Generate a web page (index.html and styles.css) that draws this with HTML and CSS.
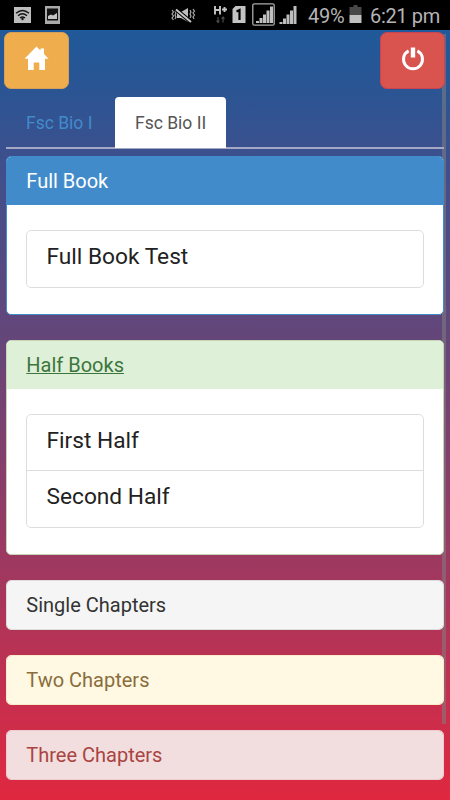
FILE: index.html
```html
<!DOCTYPE html>
<html lang="en">
<head>
<meta charset="utf-8">
<meta name="viewport" content="width=device-width, initial-scale=1">
<title>Fsc Bio II</title>
<link rel="stylesheet" href="styles.css">
</head>
<body>
<header class="status">
  <svg class="status-icons" width="300" height="30" viewBox="0 0 300 30">
    <rect x="14" y="7" width="17" height="16" fill="#bdbdbd"/>
    <g fill="none" stroke="#151515" stroke-width="1.4"><path d="M16 13.300Q22.500 7.500 29 13.300M18 15.700Q22.500 11.800 27 15.700M20 18Q22.500 15.800 25 18"/></g>
    <circle cx="22.500" cy="19" r="1.200" fill="#151515"/>
    <path fill="#aaa" d="M45 6h15v18H45z"/><path fill="#111" d="M47 8.500h11v12H47z"/><path fill="#c4c4c4" d="M48 19v-3l3-1.500 2 1 4-2.500v6z"/>
    <g fill="none" stroke="#aaa" stroke-width="1.200"><path d="M172 10l1.500 2-1.500 2 1.500 2-1.500 2 1.500 2M175 11l1 2-1 2 1 2-1 2"/><path d="M193 9l1.500 2-1.500 2 1.500 2-1.500 2 1 2M190 10l1 2-1 2 1 2-1 2"/></g>
    <path fill="#bdbdbd" d="M177 12h4l7-4v14l-7-4h-4z"/><path d="M176 9.500l15 12.500" stroke="#000" stroke-width="4"/><path d="M176 9.500l15 12.500" stroke="#c5c5c5" stroke-width="2"/>
    <path d="M215 6v8.500M220 6v8.500M215 10h5M222 9.500h5M224.500 7v5" stroke="#c4c4c4" stroke-width="1.900" fill="none"/>
    <path d="M218 17v5M216.500 20.500l1.500 2 1.500-2M223 22.500v-5M221.500 19l1.500-2 1.500 2" stroke="#4b4b4b" stroke-width="1.200" fill="none"/>
    <path fill="#c4c4c4" d="M232.500 9l3-3h10v17h-13z"/><path d="M236.500 11.500l3-1.500v10" stroke="#000" stroke-width="2.200" fill="none"/>
    <rect x="252.800" y="3.800" width="21.400" height="21.400" rx="1.500" fill="none" stroke="#aaa" stroke-width="1.300"/>
    <path fill="#c0c0c0" d="M256 21h3v2h-3zM259.500 18h3v5h-3zM263 14.500h3v8.500h-3zM266.500 10.500h3v12.500h-3zM270 6.500h3V23h-3z"/>
    <path fill="#bdbdbd" d="M279.500 22h3v2h-3zM283 18.500h3v5.500h-3zM286.500 14.500h3v9.500h-3zM290 10.500h3v13.500h-3zM293.500 6h3v18h-3z"/>
  </svg>
  <span class="percent">49%</span>
  <svg class="battery" width="13" height="20" viewBox="0 0 13 20"><path fill="#484848" d="M0.500 2h4V0h4v2h4v8h-12z"/><path fill="#c0c0c0" d="M0.500 10h12v8h-12z"/></svg>
  <span class="time">6:21 pm</span>
</header>
<main class="app">
  <div class="scrollbar"></div>
  <div class="toolbar">
    <button class="btn home" aria-label="Home"><svg width="25" height="25" viewBox="0 0 25 25"><path fill="#fff" d="M12.500 0.500L16.500 4.500V2.500h3.500v5.500l4.500 4.800H21V24h-5.700v-7.500H9.700V24H4V12.800H0.500z"/></svg></button>
    <button class="btn power" aria-label="Log out"><svg width="24" height="24" viewBox="0 0 24 24"><path d="M7.600 3.900A9.500 9.500 0 1 0 16.400 3.900" fill="none" stroke="#fff" stroke-width="3"/><path fill="#fff" d="M9.800 0.500h4.400v10H9.800z"/></svg></button>
  </div>
  <nav class="tabs"><a class="tab">Fsc Bio I</a><a class="tab active">Fsc Bio II</a></nav>
  <section class="panel primary"><h2 class="title">Full Book</h2><div class="content"><ul class="list"><li>Full Book Test</li></ul></div></section>
  <section class="panel success"><h2 class="title"><a>Half Books</a></h2><div class="content"><ul class="list"><li>First Half</li><li>Second Half</li></ul></div></section>
  <section class="panel plain"><h2 class="title">Single Chapters</h2></section>
  <section class="panel warning"><h2 class="title">Two Chapters</h2></section>
  <section class="panel danger"><h2 class="title">Three Chapters</h2></section>
</main>
</body>
</html>
```
FILE: styles.css
```css
* { box-sizing: border-box; }
body { margin: 0; width: 450px; height: 800px; overflow: hidden; font-family: Roboto, sans-serif; }
.status { height: 30px; background: #000; display: flex; color: #b5b5b5; font-size: 20px; line-height: 32px; }
.status-icons { flex: none; }
.percent { width: 49px; padding-left: 8px; letter-spacing: -.3px; }
.battery { flex: none; margin-top: 5px; }
.time { padding-left: 8px; white-space: nowrap; letter-spacing: -.35px; }
.app { position: relative; height: 770px; padding: 2px 6px 0; background: linear-gradient(#205999, #2d5493 9%, #3c508e 16%, #644679 40%, #a0385f 70%, #c92e4c 88%, #e02840); }
.toolbar { display: flex; justify-content: space-between; margin: 0 -1px 0 -2px; }
.btn { position: relative; width: 65px; height: 57px; padding: 0; border: 1px solid; border-radius: 7px; display: flex; align-items: center; justify-content: center; }
.btn svg { margin-bottom: 4px; }
.home { background: #f0ad4e; border-color: #d4a057; }
.power { background: #d9534f; border-color: #c84450; }
.tabs { position: relative; display: flex; height: 52px; margin-top: 8px; border-bottom: 2px solid #a5a8c5; }
.tab { width: 109px; height: 51px; padding-left: 20px; font-size: 17.500px; line-height: 52px; color: #428bca; }
.active { width: 111px; background: #fff; color: #555; border-radius: 4px 4px 0 0; }
.panel { position: relative; border: 1px solid; border-radius: 5px; margin: 0 0 25px; background: #fff; width: 437.500px; overflow: hidden; }
.tabs + .panel { margin-top: 7px; }
.title { margin: 0; height: 48px; padding-left: 19.300px; font-size: 20px; line-height: 48px; font-weight: 400; }
.content { padding: 25px 19px 26px; }
.list { margin: 0; padding: 0; list-style: none; border: 1px solid #ddd; border-radius: 5px; color: #222; font-size: 22.700px; }
.list li { height: 56px; line-height: 51px; padding-left: 19.500px; }
.list li:first-child:not(:last-child) { height: 55px; }
.list li + li { height: 57px; border-top: 1px solid #ddd; }
.primary { border-color: #428bca; }
.primary .title { line-height: 49px; background: #428bca; color: #fff; }
.success { border-color: #c5d5b5; }
.success .title { background: #dff0d8; color: #3c763d; }
.success a { text-decoration: underline; text-decoration-thickness: 1px; }
.plain { border-color: #ddd; }
.plain .title { background: #f5f5f5; color: #333; }
.warning { border-color: #faebcc; }
.warning .title { background: #fff8e3; color: #8a6d3b; }
.danger { border-color: #ebccd1; }
.danger .title { background: #f2dede; color: #a94442; }
.scrollbar { position: absolute; top: 4px; right: 4px; width: 4px; height: 690px; background: rgba(128,128,128,.55); }
```
